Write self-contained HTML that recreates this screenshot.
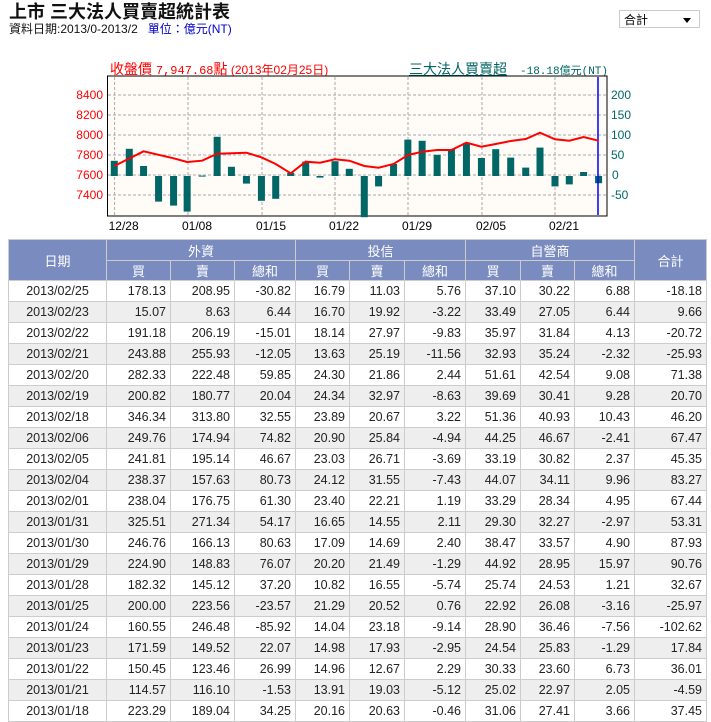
<!DOCTYPE html>
<html><head><meta charset="utf-8"><style>
body{margin:0;background:#fff;font-family:"Liberation Sans","Noto Sans CJK TC",sans-serif;width:711px;height:720px;overflow:hidden;position:relative}
.t{position:absolute;left:9px;top:2px;font-size:18px;line-height:20px;font-weight:bold;color:#111}
.s{position:absolute;left:9px;top:22px;font-size:12px;line-height:14px;color:#111}
.s b{font-weight:normal;color:#00c;margin-left:10px}
.sel{position:absolute;left:619px;top:10px;width:81px;height:18px;border:1px solid #ccc;font-size:12px;line-height:18px;box-sizing:border-box;padding-left:4px}
.sel:after{content:"";position:absolute;right:8px;top:7px;border:4px solid transparent;border-top:5px solid #000}
table{position:absolute;left:8px;top:239px;border-collapse:collapse;font-size:12.5px;color:#222}
td,th{border:1px solid #ccc;padding:0 4px;height:21px;box-sizing:border-box}
tr.h2 th{height:20px}
th{background:#7a8bbf;color:#fff;font-weight:normal;font-size:13px}
td{text-align:right}
td:first-child{text-align:center}
tr.a td{background:#eee}
svg{position:absolute;left:0;top:0}
</style></head><body>
<div class="t">上市 三大法人買賣超統計表</div>
<div class="s">資料日期:2013/0-2013/2<b>單位：億元(NT)</b></div>
<div class="sel">合計</div>
<svg width="711" height="240" id="c" font-family="Liberation Sans, Noto Sans CJK TC, sans-serif">
<text x="110" y="74" fill="#f00" font-size="14">收盤價 <tspan font-family="Liberation Mono" font-size="12">7,947.68</tspan>點<tspan font-size="12"> (2013年02月25日)</tspan></text>
<text x="409" y="74" fill="#066" font-size="14" text-decoration="underline">三大法人買賣超</text>
<text x="520" y="74" fill="#066" font-size="11" font-family="Liberation Mono">-18.18億元(NT)</text>
<rect x="107.5" y="76" width="499.5" height="140" fill="#fffbf6" stroke="#000"/>
<g id="g"></g>
</svg>
<script>
var g=document.getElementById('g'),h='';
var xs=[114.6,188,262,335,408,482,555],lb=['12/28','01/08','01/15','01/22','01/29','02/05','02/21'];
xs.forEach(function(x,i){h+='<line x1="'+x+'" y1="77" x2="'+x+'" y2="215" stroke="#aaa" stroke-dasharray="3,2"/>';h+='<text x="'+(x-6)+'" y="230" font-size="12" fill="#000">'+lb[i]+'</text>';});
var L=['8400','8200','8000','7800','7600','7400'],R=['200','150','100','50','0','-50'];
for(var i=0;i<6;i++){var y=95+i*20;h+='<line x1="108" y1="'+y+'" x2="606" y2="'+y+'" stroke="#aaa" stroke-dasharray="3,2"/>';
h+='<text x="103" y="'+(y+4)+'" text-anchor="end" font-size="12" fill="#f00">'+L[i]+'</text>';
h+='<text x="'+(R[i].length==1?612:611)+'" y="'+(y+4)+'" font-size="12" fill="#066">'+R[i]+'</text>';}
var bz=[96,138,178,220,262,300,342,384,424,466,508,548,590,632,672,714,754,796,836,878,918,958,1000,1040,1082,1124,1164,1206,1248,1288,1330,1370,1410,1452];
var bv=[38,68,25,-64,-74,-89,1,98,23,-19,-62,-57,8,36,-4,37,18,-103,-26,30,91,88,53,67,83,45,67,46,21,71,-26,-21,10,-18];
bz.forEach(function(z,i){var x=80+z/2.8,v=bv[i]*0.4,y=v>0?176-v:176;h+='<rect x="'+(x-3.5)+'" y="'+y+'" width="7" height="'+Math.max(Math.abs(v),1)+'" fill="#006666"/>';});
h+='<line x1="598" y1="77" x2="598" y2="215" stroke="#00f" stroke-width="1.5"/>';
var lp=[[96,288],[178,244],[262,265],[300,276],[342,272],[384,251],[466,248],[508,262],[548,282],[590,310],[632,275],[672,278],[714,268],[754,272],[796,288],[836,293],[878,282],[918,255],[958,245],[1000,240],[1040,240],[1082,218],[1124,230],[1164,222],[1206,213],[1248,207],[1288,188],[1330,208],[1370,212],[1410,201],[1452,212]];
h+='<polyline fill="none" stroke="#f00" stroke-width="2" points="'+lp.map(function(p){return (80+p[0]/2.8).toFixed(1)+','+(70+p[1]/3).toFixed(1)}).join(' ')+'"/>';
g.innerHTML=h;
</script>
<table>
<tr><th rowspan="2" style="width:98px">日期</th><th colspan="3">外資</th><th colspan="3">投信</th><th colspan="3">自營商</th><th rowspan="2" style="width:72px">合計</th></tr>
<tr class="h2"><th style="width:64px">買</th><th style="width:64px">賣</th><th style="width:61px">總和</th><th style="width:54px">買</th><th style="width:55px">賣</th><th style="width:61px">總和</th><th style="width:55px">買</th><th style="width:54px">賣</th><th style="width:60px">總和</th></tr>
<tr><td>2013/02/25</td><td>178.13</td><td>208.95</td><td>-30.82</td><td>16.79</td><td>11.03</td><td>5.76</td><td>37.10</td><td>30.22</td><td>6.88</td><td>-18.18</td></tr>
<tr class="a"><td>2013/02/23</td><td>15.07</td><td>8.63</td><td>6.44</td><td>16.70</td><td>19.92</td><td>-3.22</td><td>33.49</td><td>27.05</td><td>6.44</td><td>9.66</td></tr>
<tr><td>2013/02/22</td><td>191.18</td><td>206.19</td><td>-15.01</td><td>18.14</td><td>27.97</td><td>-9.83</td><td>35.97</td><td>31.84</td><td>4.13</td><td>-20.72</td></tr>
<tr class="a"><td>2013/02/21</td><td>243.88</td><td>255.93</td><td>-12.05</td><td>13.63</td><td>25.19</td><td>-11.56</td><td>32.93</td><td>35.24</td><td>-2.32</td><td>-25.93</td></tr>
<tr><td>2013/02/20</td><td>282.33</td><td>222.48</td><td>59.85</td><td>24.30</td><td>21.86</td><td>2.44</td><td>51.61</td><td>42.54</td><td>9.08</td><td>71.38</td></tr>
<tr class="a"><td>2013/02/19</td><td>200.82</td><td>180.77</td><td>20.04</td><td>24.34</td><td>32.97</td><td>-8.63</td><td>39.69</td><td>30.41</td><td>9.28</td><td>20.70</td></tr>
<tr><td>2013/02/18</td><td>346.34</td><td>313.80</td><td>32.55</td><td>23.89</td><td>20.67</td><td>3.22</td><td>51.36</td><td>40.93</td><td>10.43</td><td>46.20</td></tr>
<tr class="a"><td>2013/02/06</td><td>249.76</td><td>174.94</td><td>74.82</td><td>20.90</td><td>25.84</td><td>-4.94</td><td>44.25</td><td>46.67</td><td>-2.41</td><td>67.47</td></tr>
<tr><td>2013/02/05</td><td>241.81</td><td>195.14</td><td>46.67</td><td>23.03</td><td>26.71</td><td>-3.69</td><td>33.19</td><td>30.82</td><td>2.37</td><td>45.35</td></tr>
<tr class="a"><td>2013/02/04</td><td>238.37</td><td>157.63</td><td>80.73</td><td>24.12</td><td>31.55</td><td>-7.43</td><td>44.07</td><td>34.11</td><td>9.96</td><td>83.27</td></tr>
<tr><td>2013/02/01</td><td>238.04</td><td>176.75</td><td>61.30</td><td>23.40</td><td>22.21</td><td>1.19</td><td>33.29</td><td>28.34</td><td>4.95</td><td>67.44</td></tr>
<tr class="a"><td>2013/01/31</td><td>325.51</td><td>271.34</td><td>54.17</td><td>16.65</td><td>14.55</td><td>2.11</td><td>29.30</td><td>32.27</td><td>-2.97</td><td>53.31</td></tr>
<tr><td>2013/01/30</td><td>246.76</td><td>166.13</td><td>80.63</td><td>17.09</td><td>14.69</td><td>2.40</td><td>38.47</td><td>33.57</td><td>4.90</td><td>87.93</td></tr>
<tr class="a"><td>2013/01/29</td><td>224.90</td><td>148.83</td><td>76.07</td><td>20.20</td><td>21.49</td><td>-1.29</td><td>44.92</td><td>28.95</td><td>15.97</td><td>90.76</td></tr>
<tr><td>2013/01/28</td><td>182.32</td><td>145.12</td><td>37.20</td><td>10.82</td><td>16.55</td><td>-5.74</td><td>25.74</td><td>24.53</td><td>1.21</td><td>32.67</td></tr>
<tr class="a"><td>2013/01/25</td><td>200.00</td><td>223.56</td><td>-23.57</td><td>21.29</td><td>20.52</td><td>0.76</td><td>22.92</td><td>26.08</td><td>-3.16</td><td>-25.97</td></tr>
<tr><td>2013/01/24</td><td>160.55</td><td>246.48</td><td>-85.92</td><td>14.04</td><td>23.18</td><td>-9.14</td><td>28.90</td><td>36.46</td><td>-7.56</td><td>-102.62</td></tr>
<tr class="a"><td>2013/01/23</td><td>171.59</td><td>149.52</td><td>22.07</td><td>14.98</td><td>17.93</td><td>-2.95</td><td>24.54</td><td>25.83</td><td>-1.29</td><td>17.84</td></tr>
<tr><td>2013/01/22</td><td>150.45</td><td>123.46</td><td>26.99</td><td>14.96</td><td>12.67</td><td>2.29</td><td>30.33</td><td>23.60</td><td>6.73</td><td>36.01</td></tr>
<tr class="a"><td>2013/01/21</td><td>114.57</td><td>116.10</td><td>-1.53</td><td>13.91</td><td>19.03</td><td>-5.12</td><td>25.02</td><td>22.97</td><td>2.05</td><td>-4.59</td></tr>
<tr><td>2013/01/18</td><td>223.29</td><td>189.04</td><td>34.25</td><td>20.16</td><td>20.63</td><td>-0.46</td><td>31.06</td><td>27.41</td><td>3.66</td><td>37.45</td></tr>
</table>
</body></html>
